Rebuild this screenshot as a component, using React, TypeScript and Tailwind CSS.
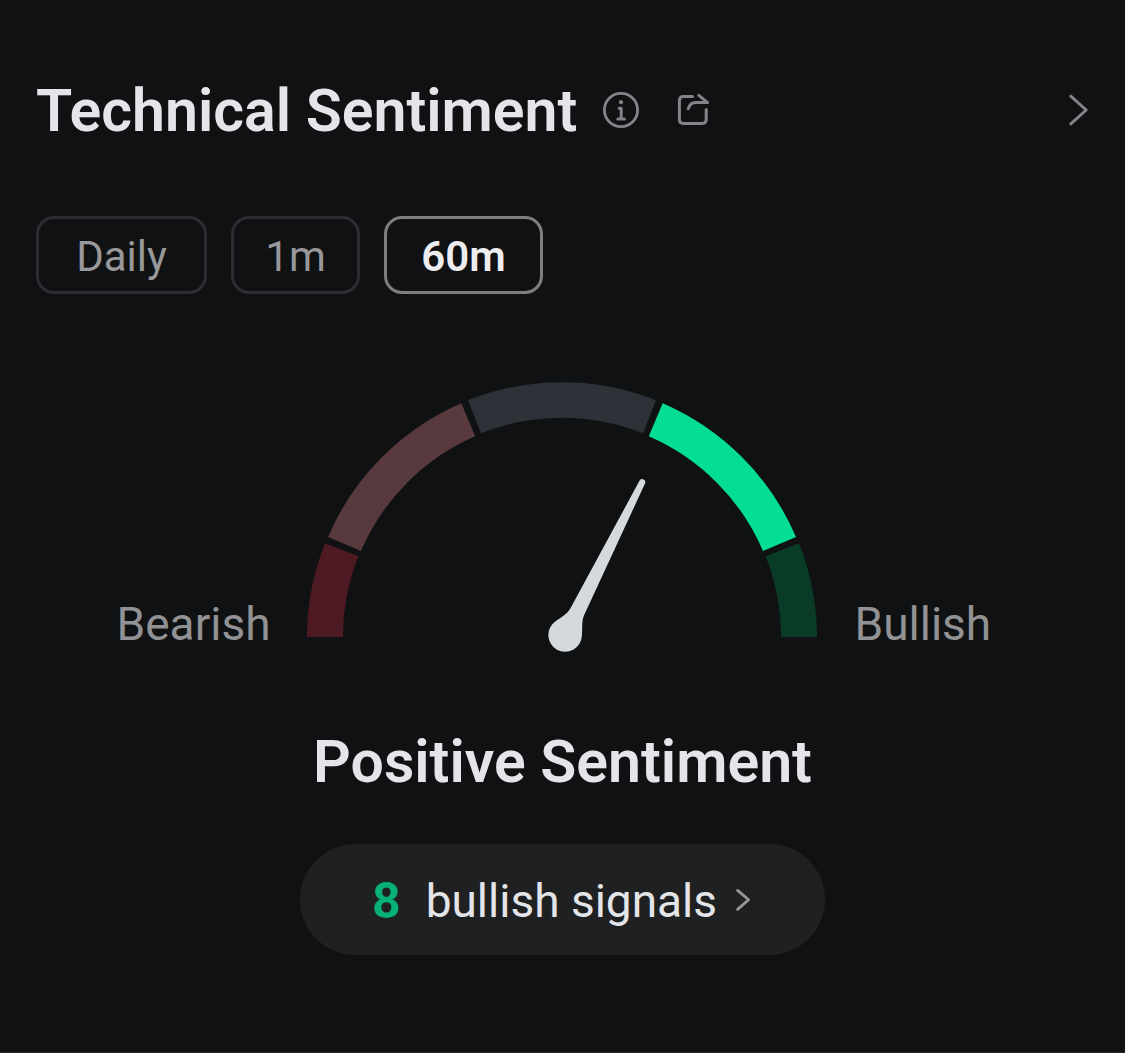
import { useState } from "react";
import clsx from "clsx";

const periods = [
  { id: "daily", label: "Daily", width: "w-[171px]" },
  { id: "1m", label: "1m", width: "w-[129px]" },
  { id: "60m", label: "60m", width: "w-[159px]" },
];

const InfoIcon = () => (
  <svg width="36" height="36" viewBox="0 0 36 36" fill="none" stroke="currentColor" aria-hidden="true">
    <circle cx="18" cy="18" r="16.6" strokeWidth="2.8" />
    <circle cx="18" cy="10.2" r="2.1" fill="currentColor" stroke="none" />
    <path d="M16.2 16.2H18.2V26.6M14.8 27H21.4" strokeWidth="3" strokeLinecap="round" strokeLinejoin="round" />
  </svg>
);

const ShareIcon = () => (
  <svg width="34" height="36" viewBox="0 0 34 36" fill="none" stroke="currentColor" strokeWidth="3" strokeLinecap="round" strokeLinejoin="round" aria-hidden="true">
    <path d="M15.6 4.6H6.2Q2.4 4.6 2.4 8.4V27.6Q2.4 31.4 6.2 31.4H25.4Q29.2 31.4 29.2 27.6V17.6" />
    <path d="M11.2 16.8C12.4 12.6 15 10.6 19 10.6H30.6L21.8 3.4" />
  </svg>
);

const Gauge = () => (
  <svg className="shrink-0" width="512" height="272" viewBox="1 0 512 272" role="img" aria-label="Sentiment gauge">
    <path d="M1 255A255 255 0 0 1 19 161.3L52.4 174.3A219 219 0 0 0 37 255Z" fill="#4d1922" />
    <path d="M22 155A255 255 0 0 1 155.3 21.2L169.2 54.2A219 219 0 0 0 55 169Z" fill="#58393d" />
    <path d="M162 18.2A255 255 0 0 1 350 18.2L337 51.3A219 219 0 0 0 175 51.3Z" fill="#2d3138" />
    <path d="M356.7 21.2A255 255 0 0 1 490 155L457 169A219 219 0 0 0 342.8 54.2Z" fill="#03de94" />
    <path d="M493 161.3A255 255 0 0 1 511 255H475A219 219 0 0 0 459.6 174.3Z" fill="#0a3b27" />
    <path
      d="M333.6 98.6A3.1 3.1 0 0 1 339 101.6L278.4 232.4C275.6 238.6 276.6 243 275.9 254A16.8 16.8 0 1 1 249.6 239.2C256.6 234.6 261.2 232 264.6 226Z"
      fill="#d6d9dc"
    />
  </svg>
);

const App = () => {
  const [active, setActive] = useState("60m");

  return (
    <main className="min-h-screen border-b border-[#2a2b2e] bg-[#101113] px-9 pt-[74px] font-['Roboto',sans-serif] text-[#e4e5e8]">
      <header className="flex h-[72px] items-center text-[#838487]">
        <h1 className="pt-0.5 text-[59px] font-semibold leading-[72px] text-[#e4e5e8]">Technical Sentiment</h1>
        <button type="button" aria-label="Info" className="ml-[26px]">
          <InfoIcon />
        </button>
        <button type="button" aria-label="Share" className="ml-[38px]">
          <ShareIcon />
        </button>
        <a href="#details" aria-label="Details" className="ml-auto">
          <svg width="22" height="36" viewBox="0 0 22 36" fill="none" stroke="currentColor" strokeWidth="3" strokeLinecap="round" strokeLinejoin="round" aria-hidden="true">
            <path d="M3.8 4.2L19.2 18L3.8 31.8" />
          </svg>
        </a>
      </header>

      <div className="mt-[70px] flex gap-6">
        {periods.map((period) => (
          <button
            key={period.id}
            type="button"
            aria-pressed={active === period.id}
            onClick={() => setActive(period.id)}
            className={clsx(
              "h-[78px] rounded-[18px] border-3 pt-1 text-[42px] leading-[68px]",
              period.width,
              active === period.id
                ? "border-[#7d7e80] font-semibold text-[#ededef]"
                : "border-[#2b2d31] text-[#98989b]"
            )}
          >
            {period.label}
          </button>
        ))}
      </div>

      <div className="mt-[88px] grid grid-cols-[1fr_auto_1fr] items-end gap-9 text-[46px] leading-[60px] text-[#929295]">
        <span className="text-right">Bearish</span>
        <Gauge />
        <span>Bullish</span>
      </div>

      <h2 className="mt-[72px] text-center text-[59px] font-semibold leading-[72px]">Positive Sentiment</h2>

      <button
        type="button"
        className="mx-auto mt-[46px] flex h-[111px] items-center rounded-full bg-[#1f2022] px-[72px] text-[46px]"
      >
        <span className="pt-1 text-[50px] font-bold text-[#06b077]">8</span>
        <span className="ml-[25px] pt-1">bullish signals</span>
        <svg className="ml-[18px] text-[#98989a]" width="18" height="28" viewBox="0 0 18 28" fill="none" stroke="currentColor" strokeWidth="2.8" strokeLinecap="round" strokeLinejoin="round" aria-hidden="true">
          <path d="M2.6 4.4L13.6 13.8L2.6 23.4" />
        </svg>
      </button>
    </main>
  );
};

export default App;
